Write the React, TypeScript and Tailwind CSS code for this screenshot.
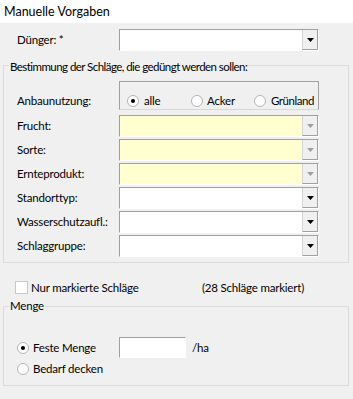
import React from "react";

const font = { fontFamily: 'Lato, "Liberation Sans", Arial, sans-serif' };

function Arrow({ disabled }: { disabled?: boolean }) {
  return (
    <svg width="7" height="4" viewBox="0 0 7 4">
      <polygon points="0,0 7,0 3.5,4" fill={disabled ? "#a0a0a0" : "#000"} />
    </svg>
  );
}

function Combo({ yellow, disabled }: { yellow?: boolean; disabled?: boolean }) {
  return (
    <div className="w-[200px] h-[22px] border border-t-[#a0a0a0] border-l-[#a0a0a0] border-r-white border-b-white flex">
      <div className={yellow ? "flex-1 bg-[#ffffd0]" : "flex-1 bg-white"} />
      <div className="w-[16px] bg-[#f0f0f0] border-l border-r border-b border-l-[#d4d4d4] border-r-[#a0a0a0] border-b-[#a0a0a0] flex items-center justify-center">
        <Arrow disabled={disabled} />
      </div>
    </div>
  );
}

function Radio({ checked }: { checked?: boolean }) {
  return (
    <div className="w-[12px] h-[12px] rounded-full border border-[#b4b4b4] bg-white flex items-center justify-center shrink-0">
      {checked && <div className="w-[4px] h-[4px] rounded-full bg-black" />}
    </div>
  );
}

function Row({ label, children }: { label: string; children: React.ReactNode }) {
  return (
    <div className="flex items-center h-[22px]">
      <div className="w-[115px] pl-[13px]">{label}</div>
      {children}
    </div>
  );
}

export default function App() {
  return (
    <div className="w-[353px] h-[399px] bg-[#f0f0f0] text-[11.5px] tracking-[-0.2px] text-black leading-[14px] flex flex-col" style={font}>
      <div className="h-[23px] bg-white pl-[4px] flex items-center shrink-0 text-[12.5px] tracking-normal">Manuelle Vorgaben</div>

      <div className="flex items-center h-[22px] mt-[6px]">
        <div className="w-[119px] pl-[17px]">Dünger: *</div>
        <Combo />
      </div>

      <div className="relative ml-[3px] mt-[14px] border border-[#dcdcdc] h-[198px] w-[346px] pt-[15px]">
        <div className="absolute top-[-6px] left-[5px] px-[1px] bg-[#f0f0f0] tracking-[-0.55px]">
          Bestimmung der Schläge, die gedüngt werden sollen:
        </div>
        <div className="flex items-start h-[29px]">
          <div className="w-[115px] pl-[13px] pt-[13px]">Anbaunutzung:</div>
          <div className="w-[200px] h-[29px] border border-[#a0a0a0] border-b-[#d8d8d8] flex items-start pt-[12px]">
            <div className="flex items-center w-[71px] pl-[7px] gap-[5px] h-[14px]">
              <Radio checked />
              <span>alle</span>
            </div>
            <div className="flex items-center w-[63px] gap-[4px] h-[14px]">
              <Radio />
              <span>Acker</span>
            </div>
            <div className="flex items-center gap-[5px] h-[14px]">
              <Radio />
              <span className="tracking-[-0.45px]">Grünland</span>
            </div>
          </div>
        </div>
        <div className="flex flex-col gap-[2px] mt-[5px]">
          <Row label="Frucht:"><Combo yellow disabled /></Row>
          <Row label="Sorte:"><Combo yellow disabled /></Row>
          <Row label="Ernteprodukt:"><Combo yellow disabled /></Row>
          <Row label="Standorttyp:"><Combo /></Row>
          <Row label="Wasserschutzaufl.:"><Combo /></Row>
          <Row label="Schlaggruppe:"><Combo /></Row>
        </div>
      </div>

      <div className="flex items-center mt-[18px] h-[13px]">
        <div className="ml-[15px] w-[13px] h-[13px] border border-[#c8c8c8] bg-white shrink-0" />
        <span className="ml-[3px] w-[171px]">Nur markierte Schläge</span>
        <span>(28 Schläge markiert)</span>
      </div>

      <div className="relative ml-[3px] mt-[12px] border border-[#dcdcdc] h-[80px] w-[346px] pt-[30px]">
        <div className="absolute top-[-8px] left-[5px] px-[1px] bg-[#f0f0f0]">Menge</div>
        <div className="flex items-center h-[21px]">
          <div className="flex items-center w-[115px] pl-[13px] gap-[4px]">
            <Radio checked />
            <span>Feste Menge</span>
          </div>
          <div className="w-[67px] h-[21px] border border-t-[#a0a0a0] border-l-[#a0a0a0] border-r-white border-b-white bg-white" />
          <span className="ml-[6px]">/ha</span>
        </div>
        <div className="flex items-center mt-[4px] h-[14px] pl-[13px] gap-[4px]">
          <Radio />
          <span>Bedarf decken</span>
        </div>
      </div>
    </div>
  );
}
